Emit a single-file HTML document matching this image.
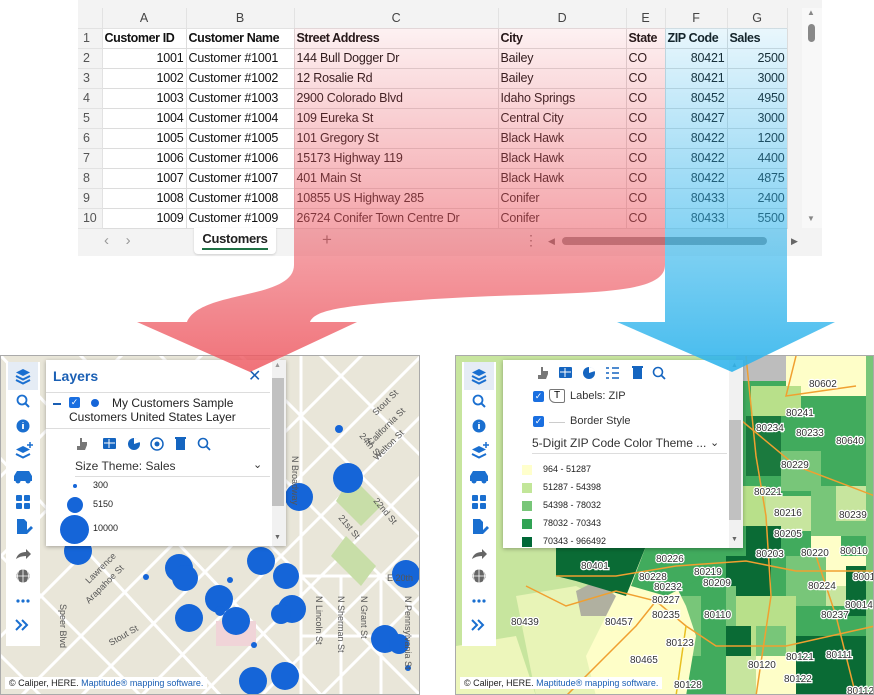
<!DOCTYPE html>
<html><head><meta charset="utf-8">
<style>
*{margin:0;padding:0;box-sizing:border-box}
body{width:874px;height:695px;background:#fff;position:relative;overflow:hidden;font-family:"Liberation Sans",sans-serif}
.abs{position:absolute}
.ss{left:78px;top:0;width:744px;height:256px;background:#f3f3f3}
table{border-collapse:collapse;table-layout:fixed;width:709px;position:absolute;left:0;top:8px;font-family:"Liberation Sans",sans-serif;font-size:12.5px;color:#111;letter-spacing:-0.2px}
td{height:20px;border-right:1px solid #dcdcdc;border-bottom:1px solid #dcdcdc;background:#fff;padding:0 2px;white-space:nowrap;overflow:hidden}
tr.h td{background:#f3f3f3;text-align:center;color:#444;height:20px;border-color:#e2e2e2}
td.rn{background:#f3f3f3;color:#555;text-align:left;padding-left:5px;border-color:#e2e2e2}
td.r{text-align:right}
tr.b td:not(.rn){font-weight:bold;letter-spacing:-0.4px}
.tb{left:6px;top:362px;width:34px;height:284px;background:#fff}
.panel{background:#fff;box-shadow:0 1px 4px rgba(0,0,0,.3)}
.copy{font-size:9px;background:#fff;padding:1px 4px;color:#222}
.copy b{color:#1a5fb4;font-weight:normal}
</style></head><body>

<div class="abs ss">
<table>
<colgroup><col style="width:24px"><col style="width:84px"><col style="width:108px"><col style="width:204px"><col style="width:128px"><col style="width:39px"><col style="width:62px"><col style="width:60px"></colgroup>
<tr class="h"><td></td><td>A</td><td>B</td><td>C</td><td>D</td><td>E</td><td>F</td><td>G</td></tr>
<tr class="b"><td class="rn">1</td><td>Customer ID</td><td>Customer Name</td><td>Street Address</td><td>City</td><td>State</td><td>ZIP Code</td><td>Sales</td></tr>
<tr><td class="rn">2</td><td class="r">1001</td><td>Customer #1001</td><td>144 Bull Dogger Dr</td><td>Bailey</td><td>CO</td><td class="r">80421</td><td class="r">2500</td></tr>
<tr><td class="rn">3</td><td class="r">1002</td><td>Customer #1002</td><td>12 Rosalie Rd</td><td>Bailey</td><td>CO</td><td class="r">80421</td><td class="r">3000</td></tr>
<tr><td class="rn">4</td><td class="r">1003</td><td>Customer #1003</td><td>2900 Colorado Blvd</td><td>Idaho Springs</td><td>CO</td><td class="r">80452</td><td class="r">4950</td></tr>
<tr><td class="rn">5</td><td class="r">1004</td><td>Customer #1004</td><td>109 Eureka St</td><td>Central City</td><td>CO</td><td class="r">80427</td><td class="r">3000</td></tr>
<tr><td class="rn">6</td><td class="r">1005</td><td>Customer #1005</td><td>101 Gregory St</td><td>Black Hawk</td><td>CO</td><td class="r">80422</td><td class="r">1200</td></tr>
<tr><td class="rn">7</td><td class="r">1006</td><td>Customer #1006</td><td>15173 Highway 119</td><td>Black Hawk</td><td>CO</td><td class="r">80422</td><td class="r">4400</td></tr>
<tr><td class="rn">8</td><td class="r">1007</td><td>Customer #1007</td><td>401 Main St</td><td>Black Hawk</td><td>CO</td><td class="r">80422</td><td class="r">4875</td></tr>
<tr><td class="rn">9</td><td class="r">1008</td><td>Customer #1008</td><td>10855 US Highway 285</td><td>Conifer</td><td>CO</td><td class="r">80433</td><td class="r">2400</td></tr>
<tr><td class="rn">10</td><td class="r">1009</td><td>Customer #1009</td><td>26724 Conifer Town Centre Dr</td><td>Conifer</td><td>CO</td><td class="r">80433</td><td class="r">5500</td></tr>
</table>
<div class="abs" style="left:724px;top:8px;width:20px;height:220px;background:#f8f8f8"></div>
<div class="abs" style="left:730px;top:24px;width:7px;height:18px;border-radius:4px;background:#888"></div>
<div class="abs" style="left:729px;top:8px;font-size:8px;color:#888">▲</div>
<div class="abs" style="left:729px;top:214px;font-size:8px;color:#888">▼</div>
<div class="abs" style="left:26px;top:232px;font-size:15px;color:#999">‹ &nbsp;&nbsp;&nbsp;›</div>
<div class="abs" style="left:116px;top:228px;width:82px;height:26px;background:#fff;border-radius:0 0 4px 4px;box-shadow:0 1px 2px rgba(0,0,0,.15);font-size:13px;font-weight:bold;color:#222;text-align:center;padding-top:3px;letter-spacing:-0.3px">Customers<div style="margin:2px auto 0;width:66px;height:2px;background:#1e7145"></div></div>
<div class="abs" style="left:244px;top:230px;font-size:17px;color:#666">+</div>
<div class="abs" style="left:446px;top:232px;font-size:14px;color:#666">⋮</div>
<div class="abs" style="left:470px;top:236px;font-size:9px;color:#666">◀</div>
<div class="abs" style="left:484px;top:237px;width:205px;height:8px;border-radius:4px;background:#888"></div>
<div class="abs" style="left:713px;top:236px;font-size:9px;color:#666">▶</div>
</div>

<div class="abs" style="left:0;top:355px;width:420px;height:340px;border:1px solid #aaa;overflow:hidden;background:#e9e6d9">
<svg width="420" height="340" style="position:absolute;left:0;top:0">
<g stroke="#fff" stroke-width="3" fill="none">
<path d="M-40,60 L220,340 M0,0 L340,360 M60,-20 L420,340 M140,-20 L460,300 M220,-20 L460,220 M300,-20 L460,140 M-60,140 L160,360 M-80,220 L60,360"/>
<path d="M20,340 L380,-20 M80,340 L440,-20 M140,340 L460,20 M200,340 L460,80 M-20,300 L320,-40 M-40,240 L240,-40 M-60,180 L180,-60 M260,340 L460,140 M320,340 L460,200"/>
<path d="M300,220 L420,220 M300,0 L300,340 M340,220 L340,340 M380,220 L380,340 M300,280 L420,280"/>
</g>
<g fill="#c8dea8"><path d="M350,120 L380,150 L360,170 L335,145Z"/><path d="M345,180 L375,210 L360,230 L330,200Z"/></g>
<rect x="215" y="265" width="40" height="25" fill="#f0d4d8"/>
<g fill="#1565d8">
<circle cx="347" cy="122" r="15"/><circle cx="298" cy="141" r="14"/><circle cx="338" cy="73" r="4"/>
<circle cx="77" cy="195" r="14"/><circle cx="178" cy="212" r="14"/><circle cx="184" cy="222" r="13"/>
<circle cx="218" cy="243" r="14"/><circle cx="219" cy="255" r="5"/><circle cx="188" cy="262" r="14"/>
<circle cx="235" cy="265" r="14"/><circle cx="260" cy="205" r="14"/><circle cx="291" cy="253" r="14"/>
<circle cx="285" cy="220" r="13"/><circle cx="280" cy="258" r="10"/><circle cx="252" cy="325" r="14"/>
<circle cx="284" cy="320" r="14"/><circle cx="405" cy="218" r="14"/><circle cx="384" cy="283" r="14"/>
<circle cx="398" cy="288" r="10"/><circle cx="407" cy="312" r="3"/><circle cx="145" cy="221" r="3"/>
<circle cx="229" cy="224" r="3"/><circle cx="253" cy="289" r="3"/>
</g>
<g font-size="9" fill="#555" font-family="Liberation Sans">
<text transform="translate(358,80) rotate(50)">24th St</text>
<text transform="translate(375,60) rotate(-45)">Stout St</text>
<text transform="translate(370,90) rotate(-45)">California St</text>
<text transform="translate(376,105) rotate(-45)">Welton St</text>
<text transform="translate(372,145) rotate(50)">22nd St</text>
<text transform="translate(337,162) rotate(50)">21st St</text>
<text transform="translate(291,100) rotate(90)">N Broadway</text>
<text transform="translate(88,228) rotate(-45)">Lawrence</text>
<text transform="translate(88,248) rotate(-45)">Arapahoe St</text>
<text transform="translate(110,290) rotate(-30)">Stout St</text>
<text transform="translate(59,248) rotate(90)">Speer Blvd</text>
<text transform="translate(315,240) rotate(90)">N Lincoln St</text>
<text transform="translate(337,240) rotate(90)">N Sherman St</text>
<text transform="translate(360,240) rotate(90)">N Grant St</text>
<text transform="translate(404,240) rotate(90)">N Pennsylvania St</text>
<text x="386" y="225">E 20th</text>
</g>
</svg>
<div class="abs copy" style="left:4px;top:321px">© Caliper, HERE. <b>Maptitude® mapping software.</b></div>
</div>

<div class="abs panel" style="left:46px;top:360px;width:240px;height:186px">
<div class="abs" style="left:7px;top:8px;font-size:14px;font-weight:bold;color:#1a5fb4">Layers</div>
<div class="abs" style="left:202px;top:6px;font-size:16px;color:#1a5fb4">✕</div>
<div class="abs" style="left:0;top:32px;width:224px;height:1px;background:#ddd"></div>
<div class="abs" style="left:7px;top:43px;width:8px;height:2px;background:#1a5fb4"></div>
<div class="abs" style="left:23px;top:37px;width:11px;height:11px;background:#1a6fe0;border-radius:2px;color:#fff;font-size:9px;line-height:11px;text-align:center">✓</div>
<div class="abs" style="left:45px;top:39px;width:8px;height:8px;border-radius:50%;background:#1565d8"></div>
<div class="abs" style="left:66px;top:36px;font-size:12px;color:#222;line-height:14px">My Customers Sample</div>
<div class="abs" style="left:23px;top:50px;font-size:12px;color:#222;line-height:14px">Customers United States Layer</div>
<div class="abs" style="left:0;top:68px;width:224px;height:1px;background:#ddd"></div>
<svg class="abs" style="left:0;top:74px" width="224" height="20">
<path d="M34,4 v8 h-3 v4 h8 l2,-5 v-3 h-5 v-4z" fill="#777"/>
<g fill="#1565c0"><rect x="57" y="4" width="13" height="11" rx="1"/><circle cx="88" cy="10" r="6"/><circle cx="111" cy="10" r="6" fill="none" stroke="#1565c0" stroke-width="1.5"/><circle cx="111" cy="10" r="2.5"/><rect x="130" y="5" width="9" height="11"/><rect x="129" y="3" width="11" height="2"/></g>
<path d="M58,9 h11 M63,5 v9" stroke="#fff" stroke-width="1"/>
<path d="M88,10 l6,-2 A6,6 0 0 0 88,4z" fill="#fff"/>
<circle cx="157" cy="9" r="4.5" fill="none" stroke="#1565c0" stroke-width="1.6"/><path d="M160,12 l4,4" stroke="#1565c0" stroke-width="1.8"/>
</svg>
<div class="abs" style="left:29px;top:99px;font-size:12px;color:#333">Size Theme: Sales</div>
<div class="abs" style="left:207px;top:98px;font-size:11px;color:#333">⌄</div>
<div class="abs" style="left:29px;top:116px;width:195px;height:1px;background:#ddd"></div>
<div class="abs" style="left:27px;top:124px;width:4px;height:4px;border-radius:50%;background:#1565d8"></div>
<div class="abs" style="left:47px;top:120px;font-size:9px;color:#222">300</div>
<div class="abs" style="left:21px;top:137px;width:16px;height:16px;border-radius:50%;background:#1565d8"></div>
<div class="abs" style="left:47px;top:139px;font-size:9px;color:#222">5150</div>
<div class="abs" style="left:14px;top:155px;width:29px;height:29px;border-radius:50%;background:#1565d8"></div>
<div class="abs" style="left:47px;top:163px;font-size:9px;color:#222">10000</div>
<div class="abs" style="left:226px;top:0;width:14px;height:186px;background:#f1f1f1"></div>
<div class="abs" style="left:226px;top:18px;width:12px;height:128px;background:#c1c1c1"></div>
<div class="abs" style="left:228px;top:2px;font-size:7px;color:#999">▲</div>
<div class="abs" style="left:228px;top:174px;font-size:7px;color:#666">▼</div>
</div>

<div class="abs" style="left:455px;top:355px;width:419px;height:340px;border:1px solid #aaa;overflow:hidden;background:#c7e59e">
<svg width="419" height="340" style="position:absolute;left:0;top:0">
<g>
<rect x="280" y="0" width="139" height="200" fill="#41ab5d"/>
<rect x="330" y="0" width="89" height="40" fill="#fefec8"/>
<rect x="280" y="0" width="50" height="25" fill="#bdbdbd"/>
<rect x="295" y="30" width="50" height="30" fill="#b8e08a"/>
<rect x="290" y="60" width="35" height="60" fill="#1b7a3e"/>
<rect x="325" y="60" width="40" height="35" fill="#41ab5d"/>
<rect x="325" y="95" width="40" height="40" fill="#78c679"/>
<rect x="365" y="40" width="54" height="60" fill="#41ab5d"/>
<rect x="280" y="130" width="30" height="40" fill="#b8e08a"/>
<rect x="310" y="140" width="45" height="35" fill="#c7e59e"/>
<rect x="355" y="130" width="64" height="50" fill="#78c679"/>
<rect x="380" y="130" width="39" height="35" fill="#c7e59e"/>
<rect x="290" y="170" width="35" height="30" fill="#0a6b35"/>
<rect x="325" y="175" width="30" height="30" fill="#41ab5d"/>
<rect x="355" y="180" width="30" height="40" fill="#fefec8"/>
<rect x="330" y="200" width="40" height="50" fill="#78c679"/>
<rect x="370" y="200" width="49" height="30" fill="#fefec8"/>
<rect x="390" y="210" width="29" height="50" fill="#0a6b35"/>
<rect x="280" y="200" width="50" height="60" fill="#41ab5d"/>
<rect x="220" y="190" width="60" height="40" fill="#41ab5d"/>
<rect x="270" y="200" width="45" height="40" fill="#0a6b35"/>
<rect x="240" y="230" width="40" height="50" fill="#78c679"/>
<rect x="280" y="240" width="60" height="60" fill="#b8e08a"/>
<rect x="340" y="250" width="50" height="50" fill="#41ab5d"/>
<rect x="390" y="260" width="29" height="50" fill="#41ab5d"/>
<rect x="300" y="270" width="30" height="30" fill="#78c679"/>
<rect x="340" y="280" width="79" height="60" fill="#0a6b35"/>
<rect x="245" y="270" width="50" height="40" fill="#0a6b35"/>
<rect x="270" y="300" width="70" height="40" fill="#c7e59e"/>
<rect x="300" y="300" width="40" height="40" fill="#fefec8"/>
<rect x="170" y="190" width="100" height="150" fill="#41ab5d"/>
<rect x="165" y="240" width="80" height="60" fill="#78c679"/>
<path d="M150,200 L200,190 L230,250 L240,280 L230,340 L140,340 L130,300 L150,260 L160,230Z" fill="#fefec8"/>
<path d="M60,240 L120,230 L160,250 L160,340 L80,340 Z" fill="#fefec8" opacity=".6"/>
<path d="M120,235 L140,225 L160,240 L150,260 L125,260Z" fill="#b0b0a0"/>
<path d="M100,190 L190,190 L170,240 L120,225 L100,220Z" fill="#0a6b35"/>
<path d="M190,190 L240,190 L250,220 L210,240 L175,230Z" fill="#41ab5d"/>
<path d="M0,290 L60,280 L80,340 L0,340Z" fill="#fefec8" opacity=".7"/>
<rect x="410" y="0" width="9" height="340" fill="#78c679"/>
</g>
<g fill="none" stroke="#f0a030" stroke-width="1.5">
<path d="M70,230 L110,250 L160,235 L200,245 L230,270 L260,290 L330,290 L419,270"/>
<path d="M100,220 L160,220 L220,210 L290,205 L340,215 L419,215"/>
<path d="M200,245 L180,270 L150,300 L110,340"/>
<path d="M290,0 L300,100 L310,160 L315,240 L300,340"/>
<path d="M360,200 L380,260 L400,340"/>
<path d="M280,60 L340,110 L419,140"/>
<path d="M340,0 L330,40 L400,30"/>
<path d="M230,270 L220,340" stroke="#e8c020"/>
</g>
<g font-size="10" fill="#333" font-family="Liberation Sans" stroke="#fff" stroke-width="2.5" paint-order="stroke">
<text x="353" y="31">80602</text>
<text x="330" y="60">80241</text><text x="300" y="75">80234</text><text x="340" y="80">80233</text>
<text x="380" y="88">80640</text><text x="325" y="112">80229</text><text x="298" y="139">80221</text>
<text x="318" y="160">80216</text><text x="383" y="162">80239</text><text x="318" y="181">80205</text>
<text x="300" y="201">80203</text><text x="345" y="200">80220</text><text x="384" y="198">80010</text>
<text x="200" y="206">80226</text><text x="125" y="213">80401</text><text x="183" y="224">80228</text>
<text x="247" y="230">80209</text><text x="198" y="234">80232</text><text x="238" y="219">80219</text>
<text x="352" y="233">80224</text><text x="397" y="224">80012</text><text x="196" y="247">80227</text>
<text x="389" y="252">80014</text><text x="149" y="269">80457</text><text x="55" y="269">80439</text>
<text x="196" y="262">80235</text><text x="248" y="262">80110</text><text x="365" y="262">80237</text>
<text x="210" y="290">80123</text><text x="174" y="307">80465</text><text x="330" y="304">80121</text>
<text x="370" y="302">80111</text><text x="292" y="312">80120</text><text x="328" y="326">80122</text>
<text x="391" y="338">80112</text><text x="218" y="332">80128</text>
</g>
</svg>
<div class="abs copy" style="left:4px;top:321px">© Caliper, HERE. <b>Maptitude® mapping software.</b></div>
</div>

<div class="abs panel" style="left:503px;top:360px;width:240px;height:188px">
<svg class="abs" style="left:0;top:3px" width="224" height="20">
<path d="M38,4 v8 h-3 v4 h8 l2,-5 v-3 h-5 v-4z" fill="#777"/>
<g fill="#1565c0"><rect x="56" y="4" width="13" height="11" rx="1"/><circle cx="86" cy="10" r="6"/><rect x="130" y="5" width="9" height="11"/><rect x="129" y="3" width="11" height="2"/></g>
<path d="M57,9 h11 M62,5 v9" stroke="#fff"/>
<path d="M86,10 l6,-2 A6,6 0 0 0 86,4z" fill="#fff"/>
<path d="M103,5 h3 M103,10 h3 M103,15 h3 M109,5 h7 M109,10 h7 M109,15 h7" stroke="#1565c0" stroke-width="1.5"/>
<circle cx="155" cy="9" r="4.5" fill="none" stroke="#1565c0" stroke-width="1.6"/><path d="M158,12 l4,4" stroke="#1565c0" stroke-width="1.8"/>
</svg>
<div class="abs" style="left:30px;top:31px;width:11px;height:11px;background:#1a6fe0;border-radius:2px;color:#fff;font-size:9px;line-height:11px;text-align:center">✓</div>
<div class="abs" style="left:46px;top:29px;width:16px;height:14px;border:1px solid #777;border-radius:2px 2px 2px 6px;font-size:10px;text-align:center;line-height:12px">T</div>
<div class="abs" style="left:67px;top:30px;font-size:11px;color:#333">Labels: ZIP</div>
<div class="abs" style="left:30px;top:56px;width:11px;height:11px;background:#1a6fe0;border-radius:2px;color:#fff;font-size:9px;line-height:11px;text-align:center">✓</div>
<div class="abs" style="left:46px;top:62px;width:16px;height:1px;background:#ccc"></div>
<div class="abs" style="left:67px;top:55px;font-size:11px;color:#333">Border Style</div>
<div class="abs" style="left:29px;top:76px;font-size:12px;color:#333">5-Digit ZIP Code Color Theme ...</div>
<div class="abs" style="left:207px;top:76px;font-size:11px;color:#333">⌄</div>
<div class="abs" style="left:29px;top:93px;width:195px;height:1px;background:#ddd"></div>
<div class="abs" style="left:19px;top:105px;width:10px;height:10px;background:#ffffcc"></div><div class="abs" style="left:40px;top:104px;font-size:9px;color:#222">964 - 51287</div>
<div class="abs" style="left:19px;top:123px;width:10px;height:10px;background:#c2e699"></div><div class="abs" style="left:40px;top:122px;font-size:9px;color:#222">51287 - 54398</div>
<div class="abs" style="left:19px;top:141px;width:10px;height:10px;background:#78c679"></div><div class="abs" style="left:40px;top:140px;font-size:9px;color:#222">54398 - 78032</div>
<div class="abs" style="left:19px;top:159px;width:10px;height:10px;background:#31a354"></div><div class="abs" style="left:40px;top:158px;font-size:9px;color:#222">78032 - 70343</div>
<div class="abs" style="left:19px;top:177px;width:10px;height:10px;background:#006837"></div><div class="abs" style="left:40px;top:176px;font-size:9px;color:#222">70343 - 966492</div>
<div class="abs" style="left:226px;top:0;width:14px;height:188px;background:#f1f1f1"></div>
<div class="abs" style="left:226px;top:60px;width:12px;height:100px;background:#c1c1c1"></div>
<div class="abs" style="left:228px;top:2px;font-size:7px;color:#666">▲</div>
<div class="abs" style="left:228px;top:176px;font-size:7px;color:#666">▼</div>
</div>

<div class="abs tb"></div>
<div class="abs tb" style="left:462px"></div>
<svg class="abs" style="left:0;top:0" width="874" height="695">
<defs>
<g id="icons">
<rect x="2" y="0" width="30" height="28" fill="#e5ecf5"/>
<g fill="#1a6fd0">
<path d="M17,7 l7,3.5 l-7,3.5 l-7,-3.5z"/><path d="M10,14 l7,3.5 l7,-3.5" fill="none" stroke="#1a6fd0" stroke-width="2"/><path d="M10,18 l7,3.5 l7,-3.5" fill="none" stroke="#1a6fd0" stroke-width="2"/>
<circle cx="16" cy="38" r="4.5" fill="none" stroke="#1a6fd0" stroke-width="1.8"/><path d="M19,41 l4,4" stroke="#1a6fd0" stroke-width="2"/>
<circle cx="17" cy="64" r="6.5"/>
<path d="M17,84 l7,3.5 l-7,3.5 l-7,-3.5z"/><path d="M10,92 l7,3.5 l7,-3.5" fill="none" stroke="#1a6fd0" stroke-width="2"/><path d="M24,80 v6 M21,83 h6" stroke="#1a6fd0" stroke-width="1.5"/>
<path d="M8,119 v-5 l3,-5 h12 l3,5 v5z"/><circle cx="12" cy="119" r="2.5"/><circle cx="22" cy="119" r="2.5"/>
<rect x="10" y="133" width="6" height="6" rx="1"/><rect x="18" y="133" width="6" height="6" rx="1"/><rect x="10" y="141" width="6" height="6" rx="1"/><rect x="18" y="141" width="6" height="6" rx="1"/>
<path d="M11,157 h7 l3,3 v12 h-10z"/><path d="M19,170 l6,-6 l2,2 l-6,6z"/>
<circle cx="12" cy="239" r="1.6"/><circle cx="17" cy="239" r="1.6"/><circle cx="22" cy="239" r="1.6"/>
<path d="M10,258 l5,5 l-5,5 M16,258 l5,5 l-5,5" fill="none" stroke="#1a6fd0" stroke-width="2"/>
</g>
<path d="M10,197 q2,-7 10,-7 v-3 l5,5 l-5,5 v-3 q-6,0 -10,3z" fill="#666"/>
<circle cx="17" cy="214" r="6.5" fill="#666"/><path d="M10.5,214 h13 M17,207.5 v13 M13,208 q-3,6 0,12 M21,208 q3,6 0,12" stroke="#fff" stroke-width="0.8" fill="none"/>
<path d="M17,62 v5 M17,60 v0.5" stroke="#fff" stroke-width="1.8"/>
</g>
</defs>
<use href="#icons" x="6" y="362"/>
<use href="#icons" x="462" y="362"/>
</svg>

<svg class="abs" style="left:0;top:0;pointer-events:none" width="874" height="695">
<defs>
<linearGradient id="rg" x1="0" y1="28" x2="0" y2="370" gradientUnits="userSpaceOnUse">
<stop offset="0" stop-color="#e85560" stop-opacity="0.08"/>
<stop offset="0.6" stop-color="#ec5a64" stop-opacity="0.55"/>
<stop offset="1" stop-color="#ee5a62" stop-opacity="0.85"/>
</linearGradient>
<linearGradient id="bg" x1="0" y1="28" x2="0" y2="370" gradientUnits="userSpaceOnUse">
<stop offset="0" stop-color="#2aaee8" stop-opacity="0.1"/>
<stop offset="0.6" stop-color="#35b6ec" stop-opacity="0.6"/>
<stop offset="1" stop-color="#30b4ec" stop-opacity="0.9"/>
</linearGradient>
</defs>
<path d="M294,28 L665,28 L665,265 C665,300 560,290 420,300 C340,306 315,310 310,322 L357,322 L250,372 L137,322 L187,322 C200,290 294,300 294,265 Z" fill="url(#rg)"/>
<path d="M665,28 L787,28 L787,322 L835,322 L732,372 L617,322 L665,322 Z" fill="url(#bg)"/>
</svg>
</body></html>
